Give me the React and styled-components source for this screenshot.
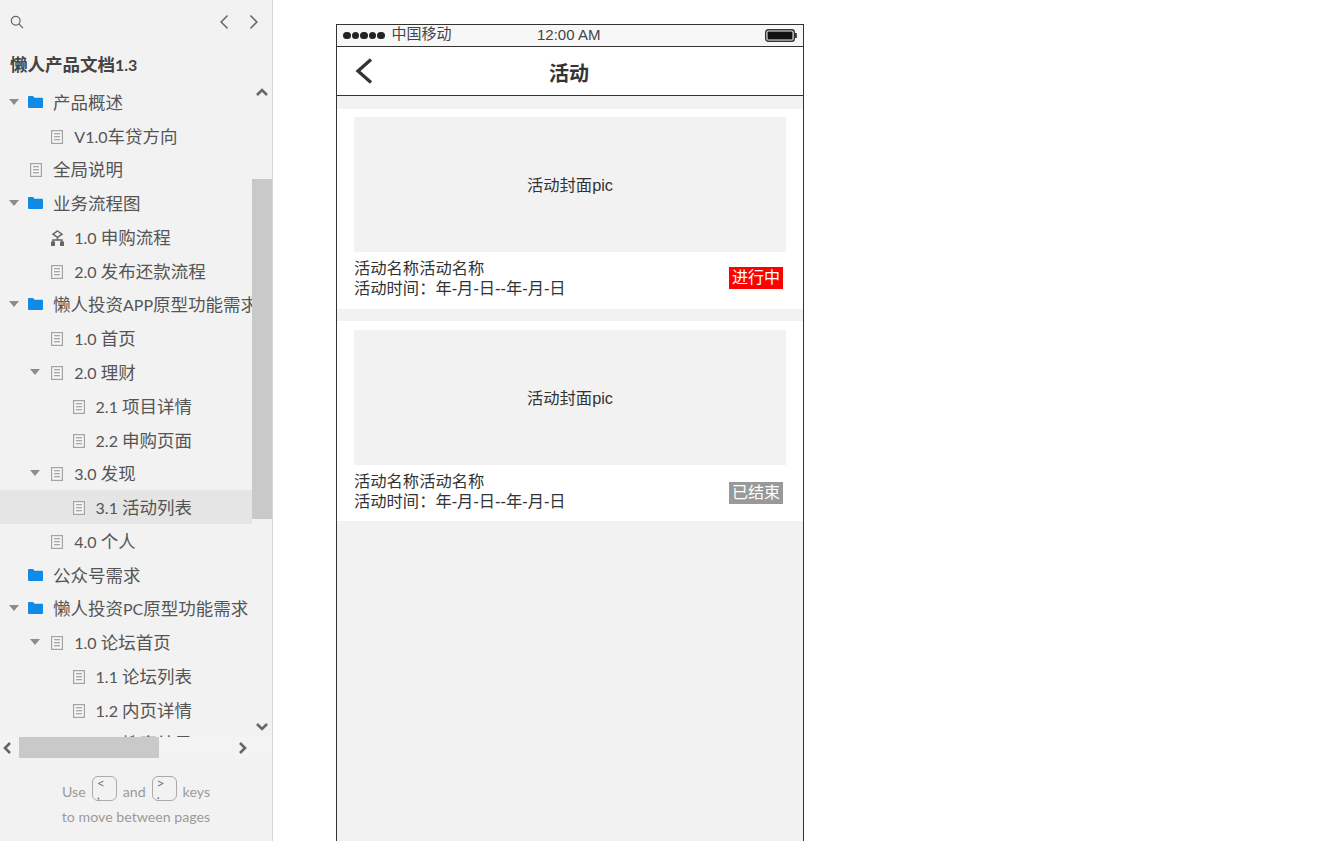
import React from "react";
import styled, { createGlobalStyle } from "styled-components";

const Global = createGlobalStyle`
  html, body { margin: 0; padding: 0; height: 100%; background: #fff; overflow: hidden; }
  #root { height: 841px; }
  * { box-sizing: border-box; }
`;

const Page = styled.div`
  display: flex;
  height: 841px;
  width: 1340px;
  overflow: hidden;
  font-family: "Liberation Sans", "Noto Sans CJK SC", sans-serif;
`;

const Sidebar = styled.aside`
  width: 273px;
  flex: none;
  display: flex;
  flex-direction: column;
  background: #f2f2f2;
  border-right: 1px solid #d6d6d6;
  font-family: "Lato", "Noto Sans CJK SC", sans-serif;
  color: #555;
`;

const TopBar = styled.div`
  height: 44px;
  flex: none;
  display: flex;
  align-items: center;
  justify-content: space-between;
  padding: 0 10px 0 10px;
`;

const NavGroup = styled.div`
  display: flex;
  gap: 10.5px;
`;

const Title = styled.div`
  height: 41px;
  flex: none;
  padding-left: 10px;
  font-size: 17.5px;
  font-weight: 700;
  line-height: 42px;
  color: #444;
  white-space: nowrap;
`;

const Latin = styled.span`
  font-size: 16px;
`;

const TreeArea = styled.div`
  position: relative;
  height: 673px;
  flex: none;
  overflow: hidden;
`;

const TreeList = styled.div`
  width: 252px;
  height: 100%;
  overflow: hidden;
`;

const Row = styled.div`
  height: 33.78px;
  display: flex;
  align-items: center;
  padding-left: ${(p) => 8 + p.$depth * 21.3}px;
  background: ${(p) => (p.$active ? "#e5e5e5" : "transparent")};
  font-size: 17.5px;
  white-space: pre;
  color: #555;
`;

const Caret = styled.span`
  width: 20px;
  flex: none;
  display: flex;
  align-items: center;
  &::before {
    content: "";
    display: ${(p) => (p.$open ? "block" : "none")};
    border-left: 5px solid transparent;
    border-right: 5px solid transparent;
    border-top: 6px solid #8c8c8c;
    margin-left: 1px;
  }
`;

const IconSlot = styled.span`
  width: 25px;
  flex: none;
  display: flex;
  align-items: center;
  padding-left: ${(p) => (p.$inset ? 2 : 0)}px;
  padding-top: ${(p) => (p.$inset ? 2 : 0)}px;
  svg { display: block; }
`;

const Label = styled.span`
  flex: none;
  margin-bottom: 1px;
`;

const VTrack = styled.div`
  position: absolute;
  right: 0;
  top: 0;
  bottom: 21px;
  width: 20px;
  background: #f2f2f2;
`;

const VThumb = styled.div`
  position: absolute;
  top: 94px;
  left: 0;
  width: 20px;
  height: 340px;
  background: #c9c9c9;
`;

const ArrowBtn = styled.span`
  position: absolute;
  display: block;
  line-height: 0;
  ${(p) => p.$pos}
`;

const HTrack = styled.div`
  position: absolute;
  left: 0;
  right: 0;
  bottom: 0;
  height: 21px;
  background: #f3f3f3;
`;

const HThumb = styled.div`
  position: absolute;
  top: 0;
  left: 19px;
  width: 140px;
  height: 21px;
  background: #c9c9c9;
`;

const Footer = styled.div`
  flex: 1;
  display: flex;
  flex-direction: column;
  align-items: center;
  padding-top: 18px;
  font-size: 14.2px;
  color: #9a9a9a;
  font-family: "Lato", sans-serif;
`;

const HintLine = styled.div`
  display: flex;
  align-items: flex-end;
  gap: 6px;
  height: 25px;
  line-height: 19px;
`;

const HintText = styled.div`
  margin-top: 4px;
  line-height: 24px;
`;

const KeyCap = styled.span`
  width: 25px;
  height: 25px;
  border: 1.5px solid #aaa;
  border-radius: 6px;
  padding-left: 4px;
  font-size: 14px;
  line-height: 11px;
  white-space: pre-line;
  color: #777;
`;

const Main = styled.main`
  flex: 1;
  padding: 24px 0 0 63px;
`;

const Phone = styled.div`
  width: 468px;
  height: 900px;
  border: 1px solid #333;
  background: #f2f2f2;
  display: flex;
  flex-direction: column;
  color: #333;
`;

const StatusBar = styled.div`
  height: 22px;
  flex: none;
  background: #f7f7f7;
  border-bottom: 1px solid #333;
  position: relative;
  display: flex;
  align-items: center;
  justify-content: space-between;
  padding: 0 6px 0 6px;
  font-size: 15px;
  color: #444;
`;

const Carrier = styled.div`
  display: flex;
  align-items: center;
  gap: 7px;
`;

const CarrierName = styled.span`
  margin-bottom: 4px;
  line-height: 20px;
`;

const Dots = styled.span`
  display: flex;
  gap: 1px;
`;

const Dot = styled.i`
  width: 7.5px;
  height: 7.5px;
  border-radius: 50%;
  background: #222;
`;

const Clock = styled.span`
  position: absolute;
  left: 200px;
  top: 0;
  line-height: 20px;
`;

const NavBar = styled.div`
  height: 49px;
  flex: none;
  background: #fff;
  border-bottom: 1px solid #333;
  position: relative;
  display: flex;
  align-items: center;
  justify-content: center;
  padding: 2px 2px 0 0;
  font-size: 20px;
  font-weight: 700;
  color: #333;
`;

const Back = styled.span`
  position: absolute;
  left: 18px;
  top: 11px;
  line-height: 0;
`;

const Card = styled.div`
  margin-top: ${(p) => p.$gap}px;
  height: 200px;
  flex: none;
  background: #fff;
  padding: ${(p) => p.$pad}px 17px 0;
`;

const Cover = styled.div`
  height: 135px;
  background: #f2f2f2;
  display: flex;
  align-items: center;
  justify-content: center;
  padding-bottom: 2px;
  font-size: 16.3px;
  color: #333;
`;

const Info = styled.div`
  display: flex;
  align-items: center;
  justify-content: space-between;
  padding-top: 6px;
  padding-right: 3px;
  font-size: 16.3px;
  line-height: 20px;
  color: #333;
`;

const Badge = styled.span`
  width: 54px;
  height: 22px;
  background: ${(p) => p.$bg};
  color: #fff;
  font-size: 16px;
  line-height: 22px;
  text-align: center;
  margin-top: ${(p) => p.$shift}px;
`;

const FileIcon = () => (
  <svg width="12" height="14" viewBox="0 0 12 14" fill="none" stroke="#a3a3a3">
    <rect x="0.6" y="0.6" width="10.8" height="12.8" fill="#f6f6f6" strokeWidth="1.2" />
    <path d="M3 3.8h6M3 6.8h6M3 9.8h6" strokeWidth="1.1" stroke="#8f8f8f" />
  </svg>
);
const FolderIcon = () => (
  <svg width="15" height="12" viewBox="0 0 15 12">
    <path d="M0 1a1 1 0 0 1 1-1h4l1.5 1.8H14a1 1 0 0 1 1 1V11a1 1 0 0 1-1 1H1a1 1 0 0 1-1-1z" fill="#0f8be6" />
  </svg>
);
const FlowIcon = () => (
  <svg width="13" height="16" viewBox="0 0 13 16" fill="none" stroke="#666" strokeWidth="1.5">
    <path d="M6.5 1 11 4.2 6.5 7.4 2 4.2z" />
    <path d="M6.5 7.4v2.6M2 12.5V10h9v2.5" />
    <rect x="0" y="11.5" width="4" height="4.5" fill="#666" stroke="none" />
    <rect x="9" y="11.5" width="4" height="4.5" fill="#666" stroke="none" />
  </svg>
);

const tree = [
  { d: 0, t: "产品概述", i: "folder", o: 1 },
  { d: 1, t: "V1.0车贷方向", i: "file" },
  { d: 0, t: "全局说明", i: "file" },
  { d: 0, t: "业务流程图", i: "folder", o: 1 },
  { d: 1, t: "1.0 申购流程", i: "flow" },
  { d: 1, t: "2.0 发布还款流程", i: "file" },
  { d: 0, t: "懒人投资APP原型功能需求", i: "folder", o: 1 },
  { d: 1, t: "1.0 首页", i: "file" },
  { d: 1, t: "2.0 理财", i: "file", o: 1 },
  { d: 2, t: "2.1 项目详情", i: "file" },
  { d: 2, t: "2.2 申购页面", i: "file" },
  { d: 1, t: "3.0 发现", i: "file", o: 1 },
  { d: 2, t: "3.1 活动列表", i: "file", a: 1 },
  { d: 1, t: "4.0 个人", i: "file" },
  { d: 0, t: "公众号需求", i: "folder" },
  { d: 0, t: "懒人投资PC原型功能需求", i: "folder", o: 1 },
  { d: 1, t: "1.0 论坛首页", i: "file", o: 1 },
  { d: 2, t: "1.1 论坛列表", i: "file" },
  { d: 2, t: "1.2 内页详情", i: "file" },
  { d: 2, t: "1.3 搜索结果", i: "file" },
];

const icons = { file: FileIcon, folder: FolderIcon, flow: FlowIcon };

const Mixed = ({ text }) =>
  text.split(/([A-Za-z0-9. ]+)/).map((part, i) =>
    i % 2 ? <Latin key={i}>{part}</Latin> : part
  );

const Chevron = ({ dir, size = 14, w = 2, color = "#666" }) => {
  const d = { left: "M9 2 4 7l5 5", right: "M5 2l5 5-5 5", up: "M2 9l5-5 5 5", down: "M2 5l5 5 5-5" }[dir];
  return (
    <svg width={size} height={size} viewBox="0 0 14 14" fill="none" stroke={color} strokeWidth={w}>
      <path d={d} />
    </svg>
  );
};

const items = [
  { gap: 13, pad: 8, shift: 0, bg: "#ff0000", s: "进行中" },
  { gap: 12, pad: 9, shift: 4, bg: "#999999", s: "已结束" },
];

export default function App() {
  return (
    <Page>
      <Global />
      <Sidebar>
        <TopBar>
          <svg width="14" height="14" viewBox="0 0 14 14" fill="none" stroke="#666" strokeWidth="1.2">
            <circle cx="5.7" cy="5.7" r="4.4" />
            <path d="m9 9 4 4.2" />
          </svg>
          <NavGroup>
            <Chevron dir="left" size="18" w="1.2" />
            <Chevron dir="right" size="18" w="1.2" />
          </NavGroup>
        </TopBar>
        <Title><Mixed text="懒人产品文档1.3" /></Title>
        <TreeArea>
          <TreeList>
            {tree.map((r) => {
              const Ico = icons[r.i];
              return (
                <Row key={r.t} $depth={r.d} $active={r.a}>
                  <Caret $open={r.o} />
                  <IconSlot $inset={r.i !== "folder"}><Ico /></IconSlot>
                  <Label><Mixed text={r.t} /></Label>
                </Row>
              );
            })}
          </TreeList>
          <VTrack>
            <ArrowBtn $pos="left: 3px; top: 1px;"><Chevron dir="up" w="2.6" /></ArrowBtn>
            <VThumb />
            <ArrowBtn $pos="left: 3px; bottom: 4px;"><Chevron dir="down" w="2.6" /></ArrowBtn>
          </VTrack>
          <HTrack>
            <ArrowBtn $pos="left: 1px; top: 4px;"><Chevron dir="left" w="2.6" /></ArrowBtn>
            <HThumb />
            <ArrowBtn $pos="left: 235px; top: 4px;"><Chevron dir="right" w="2.6" /></ArrowBtn>
          </HTrack>
        </TreeArea>
        <Footer>
          <HintLine>
            Use <KeyCap>{"<\n,"}</KeyCap> and <KeyCap>{">\n."}</KeyCap> keys
          </HintLine>
          <HintText>to move between pages</HintText>
        </Footer>
      </Sidebar>
      <Main>
        <Phone>
          <StatusBar>
            <Carrier>
              <Dots>{[0, 1, 2, 3, 4].map((i) => <Dot key={i} />)}</Dots>
              <CarrierName>中国移动</CarrierName>
            </Carrier>
            <Clock>12:00 AM</Clock>
            <svg width="32" height="13" viewBox="0 0 32 13">
              <rect x="0.7" y="0.7" width="28.6" height="11.6" rx="2.5" fill="none" stroke="#333" strokeWidth="1.4" />
              <rect x="2.5" y="2.5" width="25" height="8" fill="#111" />
              <rect x="30" y="4" width="1.8" height="5" fill="#333" />
            </svg>
          </StatusBar>
          <NavBar>
            <Back>
              <svg width="18" height="26" viewBox="0 0 18 26" fill="none" stroke="#333" strokeWidth="3.3">
                <path d="M16 1.5 3 13l13 11.5" />
              </svg>
            </Back>
            活动
          </NavBar>
          {items.map((c) => (
            <Card key={c.s} $gap={c.gap} $pad={c.pad}>
              <Cover>活动封面pic</Cover>
              <Info>
                <div>活动名称活动名称<br />活动时间：年-月-日--年-月-日</div>
                <Badge $bg={c.bg} $shift={c.shift}>{c.s}</Badge>
              </Info>
            </Card>
          ))}
        </Phone>
      </Main>
    </Page>
  );
}
